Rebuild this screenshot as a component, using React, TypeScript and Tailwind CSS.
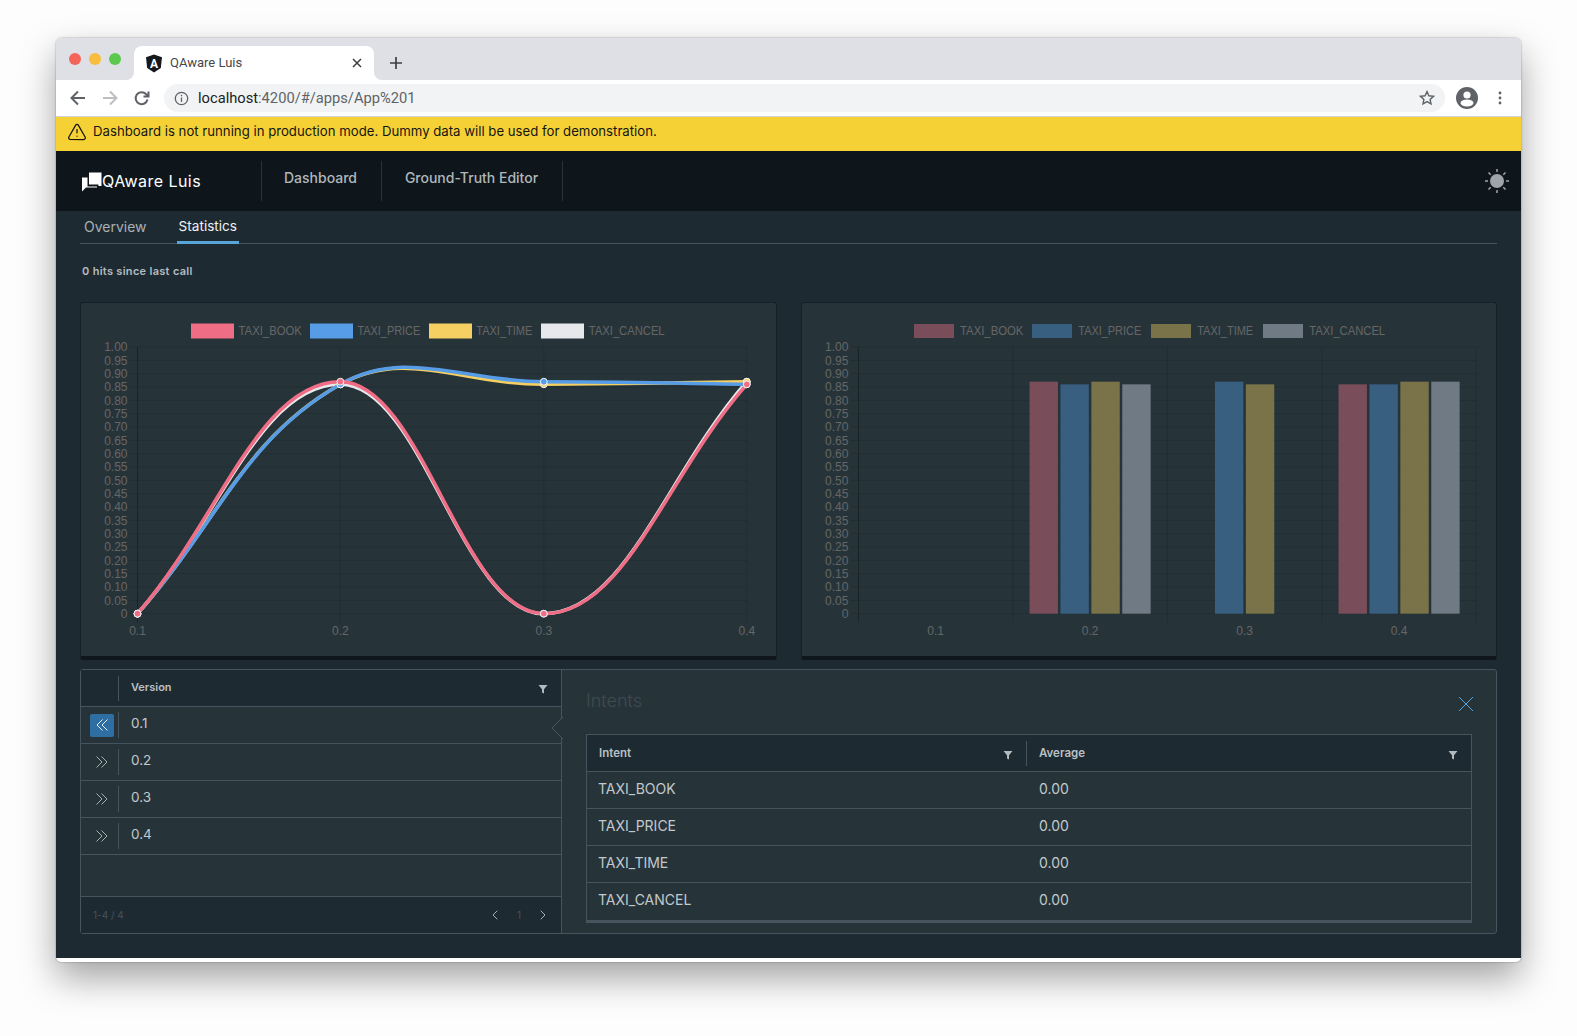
import { ChevronLeft, ChevronRight, TriangleAlert } from 'lucide-react';

const ARIAL = { fontFamily: '"Liberation Sans", Arial, sans-serif' };

// value axis shared by both charts, relative to the panel
const PLOT_TOP = 45;
const PLOT_BOTTOM = 311.7;
const TICKS = ['1.00', '0.95', '0.90', '0.85', '0.80', '0.75', '0.70', '0.65', '0.60', '0.55', '0.50', '0.45', '0.40', '0.35', '0.30', '0.25', '0.20', '0.15', '0.10', '0.05', '0'];

function valueY(v: number): number {
  return PLOT_BOTTOM - (PLOT_BOTTOM - PLOT_TOP) * v;
}

// same spline as a chart.js line with tension 0.4
function splinePath(points: [number, number][]): string {
  const controls = points.map((p, i) => {
    const prev = points[i - 1] ?? p;
    const next = points[i + 1] ?? p;
    const d01 = Math.hypot(p[0] - prev[0], p[1] - prev[1]);
    const d12 = Math.hypot(next[0] - p[0], next[1] - p[1]);
    const total = d01 + d12 || 1;
    const fa = (0.4 * d01) / total;
    const fb = (0.4 * d12) / total;
    return {
      before: [p[0] - fa * (next[0] - prev[0]), p[1] - fa * (next[1] - prev[1])],
      after: [p[0] + fb * (next[0] - prev[0]), p[1] + fb * (next[1] - prev[1])],
    };
  });
  let d = `M${points[0][0]} ${points[0][1]}`;
  for (let i = 1; i < points.length; i++) {
    const a = controls[i - 1].after;
    const b = controls[i].before;
    d += ` C${a[0]} ${a[1]} ${b[0]} ${b[1]} ${points[i][0]} ${points[i][1]}`;
  }
  return d;
}

const LINE_X = [57.5, 260.4, 463.8, 666.8];
const LINE_SERIES = [
  { color: '#e6e8ec', values: [0, 0.86, 0, 0.87] },
  { color: '#f5cf62', values: [0, 0.86, 0.86, 0.87] },
  { color: '#569ce6', values: [0, 0.86, 0.87, 0.86] },
  { color: '#f06d86', values: [0, 0.87, 0, 0.86] },
];
const LINE_LEGEND = [
  { x: 111, text: 158.5, len: 63.4, label: 'TAXI_BOOK', color: '#f06d86' },
  { x: 230, text: 277.4, len: 62.9, label: 'TAXI_PRICE', color: '#569ce6' },
  { x: 349, text: 396.3, len: 56, label: 'TAXI_TIME', color: '#f5cf62' },
  { x: 461, text: 508.8, len: 75.8, label: 'TAXI_CANCEL', color: '#e6e8ec' },
];

const BAR_LEFT = 57.4;
const BAR_STEP = 154.5;
const BAR_COLORS = ['#7a4d5a', '#385e80', '#7a7349', '#6f7a84'];
const BAR_DATA = [
  [0, 0, 0, 0],
  [0.87, 0.86, 0.87, 0.86],
  [0, 0.87, 0.86, 0],
  [0.86, 0.86, 0.87, 0.87],
];
const BAR_LEGEND = [
  { x: 113, text: 159, len: 63.4, label: 'TAXI_BOOK', color: BAR_COLORS[0] },
  { x: 231, text: 277.3, len: 62.9, label: 'TAXI_PRICE', color: BAR_COLORS[1] },
  { x: 350, text: 396.2, len: 56, label: 'TAXI_TIME', color: BAR_COLORS[2] },
  { x: 462, text: 508.3, len: 75.8, label: 'TAXI_CANCEL', color: BAR_COLORS[3] },
];

function ValueAxis({ left, right }: { left: number; right: number }) {
  return (
    <g fontSize="12" fill="#666" style={ARIAL}>
      {TICKS.map((t, i) => {
        const y = valueY(1 - i * 0.05);
        return (
          <g key={t}>
            <line x1={left - 8} x2={right} y1={y} y2={y} stroke="#000" strokeOpacity="0.13" />
            <text x={left - 10} y={y + 4.3} textAnchor="end">{t}</text>
          </g>
        );
      })}
      <line x1={left} x2={left} y1={PLOT_TOP} y2={PLOT_BOTTOM + 9} stroke="#000" strokeOpacity="0.3" />
    </g>
  );
}

function LineChart() {
  return (
    <svg viewBox="1 1 695 353" className="block w-full h-full">
      {LINE_LEGEND.map((l) => (
        <g key={l.label}>
          <rect x={l.x} y={21.5} width={43} height={15} fill={l.color} />
          <text x={l.text} y={33} fontSize="12" fill="#666" textLength={l.len} lengthAdjust="spacingAndGlyphs" style={ARIAL}>{l.label}</text>
        </g>
      ))}
      <ValueAxis left={LINE_X[0]} right={LINE_X[3]} />
      {LINE_X.map((x, i) => (
        <g key={x}>
          {i > 0 && <line x1={x} x2={x} y1={PLOT_TOP} y2={PLOT_BOTTOM + 9} stroke="#000" strokeOpacity="0.13" />}
          <text x={x} y={333} fontSize="12" fill="#666" textAnchor="middle" style={ARIAL}>{`0.${i + 1}`}</text>
        </g>
      ))}
      {LINE_SERIES.map((s) => (
        <path
          key={s.color}
          d={splinePath(s.values.map((v, i) => [LINE_X[i], valueY(v)]))}
          fill="none"
          stroke={s.color}
          strokeWidth="3.5"
        />
      ))}
      {LINE_SERIES.map((s) =>
        s.values.map((v, i) => (
          <circle key={`${s.color}${i}`} cx={LINE_X[i]} cy={valueY(v)} r="3.4" fill={s.color} stroke="#f2f2f2" strokeWidth="1" />
        )),
      )}
    </svg>
  );
}

function BarChart() {
  return (
    <svg viewBox="1 1 694 353" className="block w-full h-full">
      {BAR_LEGEND.map((l) => (
        <g key={l.label}>
          <rect x={l.x} y={22} width={40} height={14} fill={l.color} />
          <text x={l.text} y={33} fontSize="12" fill="#666" textLength={l.len} lengthAdjust="spacingAndGlyphs" style={ARIAL}>{l.label}</text>
        </g>
      ))}
      <ValueAxis left={BAR_LEFT} right={BAR_LEFT + BAR_STEP * 4} />
      {[1, 2, 3, 4].map((i) => {
        const x = BAR_LEFT + BAR_STEP * i;
        return <line key={i} x1={x} x2={x} y1={PLOT_TOP} y2={PLOT_BOTTOM + 9} stroke="#000" strokeOpacity="0.13" />;
      })}
      {BAR_DATA.map((group, c) => {
        const start = BAR_LEFT + BAR_STEP * c + BAR_STEP * 0.1;
        return (
          <g key={c}>
            {group.map((v, i) =>
              v > 0 ? (
                <rect
                  key={i}
                  x={start + i * 30.9 + 1.2}
                  y={valueY(v)}
                  width={28.4}
                  height={PLOT_BOTTOM - valueY(v)}
                  fill={BAR_COLORS[i]}
                />
              ) : null,
            )}
            <text x={BAR_LEFT + BAR_STEP * (c + 0.5)} y={333} fontSize="12" fill="#666" textAnchor="middle" style={ARIAL}>
              {`0.${c + 1}`}
            </text>
          </g>
        );
      })}
    </svg>
  );
}

function FilterIcon({ className }: { className?: string }) {
  return (
    <svg width="10" height="10" viewBox="0 0 10 10" className={className}>
      <path d="M0.5 1h9L6 5.2V9.5L4 8.6V5.2z" fill="#b4bbbf" />
    </svg>
  );
}

function DoubleChevron({ dir, color }: { dir: 'left' | 'right'; color: string }) {
  return (
    <svg width="14" height="14" viewBox="0 0 14 14" fill="none" stroke={color} strokeWidth="1">
      {dir === 'right' ? <path d="M1.5 1.5 7 7l-5.5 5.5M6.5 1.5 12 7l-5.5 5.5" /> : <path d="M12.5 1.5 7 7l5.5 5.5M7.5 1.5 2 7l5.5 5.5" />}
    </svg>
  );
}

function ChromeBar() {
  return (
    <>
      <div className="h-[42px] bg-[#dfe0e5] rounded-t-[6px] flex items-end pl-[13px]">
        <div className="flex gap-[8px] self-start mt-[15px]">
          <span className="w-3 h-3 rounded-full bg-[#f4645a]" />
          <span className="w-3 h-3 rounded-full bg-[#f8bd3c]" />
          <span className="w-3 h-3 rounded-full bg-[#5ac94e]" />
        </div>
        <div className="relative ml-[13px] w-[240px] h-[34px] bg-white rounded-t-[8px] flex items-center pl-[11px] pr-[12px] font-['Roboto',sans-serif] text-[13px] text-[#45474a]">
          {/* flared tab corners */}
          <svg width="8" height="8" viewBox="0 0 8 8" className="absolute -left-[8px] bottom-0"><path d="M8 0v8H0a8 8 0 0 0 8-8z" fill="#fff" /></svg>
          <svg width="8" height="8" viewBox="0 0 8 8" className="absolute -right-[8px] bottom-0"><path d="M0 0v8h8a8 8 0 0 1-8-8z" fill="#fff" /></svg>
          <svg width="18" height="19" viewBox="0 0 18 19">
            <path d="M9 0.5 17 3.3 15.8 14 9 18.5 2.2 14 1 3.3z" fill="#16191c" />
            <text x="9" y="14" textAnchor="middle" fontSize="12" fontWeight="700" fill="#fff" fontFamily="Roboto, sans-serif">A</text>
          </svg>
          <span className="ml-[7px] flex-1">QAware Luis</span>
          <svg width="10" height="10" viewBox="0 0 10 10" stroke="#3c3f42" strokeWidth="1.5"><path d="m1 1 8 8M9 1 1 9" /></svg>
        </div>
        <svg width="14" height="14" viewBox="0 0 14 14" stroke="#3c3f42" strokeWidth="1.7" className="ml-[15px] mb-[10px]"><path d="M7 1v12M1 7h12" /></svg>
      </div>
      <div className="h-[37px] bg-white border-b border-[#d2d3d6] flex items-center">
        <svg width="18" height="18" viewBox="0 0 18 18" fill="none" stroke="#5f6368" strokeWidth="2" className="ml-[13px]"><path d="M16 9H3M9 2.5 2.5 9 9 15.5" /></svg>
        <svg width="18" height="18" viewBox="0 0 18 18" fill="none" stroke="#bcbec1" strokeWidth="2" className="ml-[14px]"><path d="M2 9h13M9 2.5 15.5 9 9 15.5" /></svg>
        <svg width="18" height="18" viewBox="0 0 18 18" fill="none" stroke="#5f6368" strokeWidth="2" className="ml-[14px]"><path d="M14.5 10.5A6 6 0 1 1 13 5l2 2M15.5 2.5V7.5H10.5" /></svg>
        <div className="ml-[13px] w-[1281px] h-[28px] rounded-full bg-[#f1f3f4] flex items-center pl-[10px] pr-[10px] font-['Roboto',sans-serif] text-[14.7px]">
          <svg width="15" height="15" viewBox="0 0 15 15" fill="none" stroke="#5f6368" strokeWidth="1.3">
            <circle cx="7.5" cy="7.5" r="6.2" />
            <path d="M7.5 6.5v4.4M7.5 3.8v1.5" />
          </svg>
          <span className="ml-[9px] flex-1">
            <span className="text-[#202124]">localhost</span>
            <span className="text-[#5f6368]">:4200/#/apps/App%201</span>
          </span>
          <svg width="16" height="16" viewBox="0 0 16 16" fill="none" stroke="#5f6368" strokeWidth="1.4"><path d="m8 1.6 1.9 4.2 4.6.5-3.4 3.1.9 4.5L8 11.6l-4 2.3.9-4.5L1.5 6.3l4.6-.5z" /></svg>
        </div>
        <svg width="22" height="22" viewBox="0 0 22 22" className="ml-[11px]">
          <circle cx="11" cy="11" r="11" fill="#5f6368" />
          <circle cx="11" cy="8" r="3.6" fill="#fff" />
          <ellipse cx="11" cy="16" rx="6.5" ry="3.4" fill="#fff" />
        </svg>
        <svg width="4" height="14" viewBox="0 0 4 14" fill="#5f6368" className="ml-[20px]">
          <circle cx="2" cy="2" r="1.4" /><circle cx="2" cy="7" r="1.4" /><circle cx="2" cy="12" r="1.4" />
        </svg>
      </div>
    </>
  );
}

function VersionTable() {
  const rows = ['0.1', '0.2', '0.3', '0.4'];
  return (
    <div className="w-[481px] shrink-0 flex flex-col border-r border-[#46555d]">
      <div className="h-[37px] bg-[#1e2a32] border-b border-[#46555d] flex items-start pt-[6px]">
        <div className="w-[38px] h-[25px] border-r border-[#46555d]" />
        <span className="ml-[12px] mt-[3px] text-[11px] font-semibold text-[#b9c0c4]">Version</span>
        <FilterIcon className="ml-auto mr-[13px] mt-[8px]" />
      </div>
      {rows.map((r, i) => (
        <div key={r} className="h-[37px] border-b border-[#46555d] flex items-center">
          <div className="w-[38px] h-[26px] border-r border-[#46555d] flex items-center justify-center pl-[4px]">
            {i === 0 ? (
              <span className="w-[24px] h-[23px] rounded-[2px] bg-[#2f6ea3] flex items-center justify-center">
                <DoubleChevron dir="left" color="#e6eef5" />
              </span>
            ) : (
              <DoubleChevron dir="right" color="#a7afb3" />
            )}
          </div>
          <span className="ml-[12px] text-[13.5px] text-[#c3c9cc] -mt-[3px]">{r}</span>
        </div>
      ))}
      <div className="flex-1" />
      <div className="h-[37px] bg-[#1e2a32] border-t border-[#46555d] flex items-center pl-[12px] pr-[10px] text-[10px] text-[#45525a]">
        <span>1-4 / 4</span>
        <ChevronLeft size={16} className="ml-auto text-[#a7afb3]" strokeWidth={1.5} />
        <span className="mx-[14px]">1</span>
        <ChevronRight size={16} className="text-[#a7afb3]" strokeWidth={1.5} />
      </div>
    </div>
  );
}

function IntentDetail() {
  const rows = ['TAXI_BOOK', 'TAXI_PRICE', 'TAXI_TIME', 'TAXI_CANCEL'];
  return (
    <div className="flex-1 relative pl-[24px] pr-[24px]">
      <svg width="12" height="22" viewBox="0 0 12 22" className="absolute -left-[11px] top-[47px]">
        <path d="M12 0 1 11l11 11" fill="#26343a" stroke="#46555d" />
      </svg>
      <div className="h-[64px] flex items-start justify-between">
        <span className="mt-[17px] text-[18px] font-light text-[#414a4f]">Intents</span>
        <svg width="16" height="16" viewBox="0 0 16 16" stroke="#57a5d8" strokeWidth="1" className="mt-[26px] mr-[-2px]"><path d="m1 1 14 14M15 1 1 15" /></svg>
      </div>
      <div className="border-x border-t border-b-[3px] border-[#46555d]">
        <div className="h-[37px] bg-[#1e2a32] border-b border-[#46555d] flex pt-[6px]">
          <div className="w-[440px] h-[25px] border-r border-[#46555d] flex items-start pl-[12px]">
            <span className="mt-[4px] text-[11.5px] font-semibold text-[#b9c0c4]">Intent</span>
            <FilterIcon className="ml-auto mr-[13px] mt-[9px]" />
          </div>
          <div className="flex-1 flex items-start pl-[12px]">
            <span className="mt-[4px] text-[11.5px] font-semibold text-[#b9c0c4]">Average</span>
            <FilterIcon className="ml-auto mr-[13px] mt-[9px]" />
          </div>
        </div>
        {rows.map((r, i) => (
          <div key={r} className={`h-[37px] flex items-center text-[14px] text-[#c3c9cc] ${i < 3 ? 'border-b border-[#46555d]' : ''}`}>
            <span className="w-[439px] pl-[11px] -mt-[4px]">{r}</span>
            <span className="pl-[13px] -mt-[4px]">0.00</span>
          </div>
        ))}
      </div>
    </div>
  );
}

export default function App() {
  return (
    <div className="h-[1036px] overflow-hidden bg-[#fdfdfd] pl-[56px] pt-[38px] font-['Inter',sans-serif]">
      <div className="w-[1465px] h-[924px] bg-white pb-[4px] flex flex-col rounded-t-[6px] rounded-b-[5px] shadow-[0_0_2px_rgba(0,0,0,0.4),0_16px_36px_rgba(0,0,0,0.36)]">
        <ChromeBar />

        {/* Dev mode warning */}
        <div className="h-[34px] bg-[#f5d135] flex items-center pl-[11px] text-[13.2px] text-[#151515]">
          <TriangleAlert size={20} strokeWidth={1.5} className="-mt-[4px]" />
          <span className="ml-[6px] -mt-[5px]">Dashboard is not running in production mode. Dummy data will be used for demonstration.</span>
        </div>

        {/* Header */}
        <div className="h-[60px] bg-[#0e161c] flex items-center pl-[25px] pr-[12px]">
          <svg width="22" height="22" viewBox="0 0 22 22" fill="#fff" className="mt-[1px] shrink-0">
            <path d="M8 1.5h12.500v13.500h-3l-0.200-1.400H8z" />
            <path d="M1 6.500h5.500v9h9.500v1H5L1 20.500z" />
          </svg>
          <span className="-ml-px w-[159px] text-[16px] text-white tracking-[0.45px]">QAware Luis</span>
          <div className="h-[40px] border-l border-[#2a3238] flex">
            <a className="w-[120px] border-r border-[#2a3238] text-center pt-[6px] pr-[2px] text-[14px] font-medium text-[#b0b7bb]">Dashboard</a>
            <a className="w-[181px] border-r border-[#2a3238] text-center pt-[6px] pr-[1px] text-[14px] font-medium text-[#b0b7bb]">Ground-Truth Editor</a>
          </div>
          <svg width="24" height="24" viewBox="0 0 24 24" stroke="#9fa4a8" strokeWidth="1.5" className="ml-auto">
            <circle cx="12" cy="12" r="7" fill="#9fa4a8" stroke="none" />
            <path d="M12 0v3M12 21v3M0 12h3M21 12h3M3.500 3.500l2.200 2.200M18.300 18.300l2.200 2.200M20.500 3.500l-2.200 2.200M5.700 18.300l-2.200 2.200" />
          </svg>
        </div>

        {/* Page */}
        <div className="flex-1 bg-[#1e2a32] px-[24px] flex flex-col">
          <div className="h-[33px] border-b border-[#46555d] flex items-start text-[14px]">
            <span className="ml-[4px] mt-[5px] text-[#a9b1b5]">Overview</span>
            <span className="ml-[30px] px-[2px] h-[33px] pt-[5px] border-b-[3px] border-[#57a5d8] text-[13.6px] text-[#eef1f2]">Statistics</span>
          </div>
          <p className="mt-[20px] ml-[2px] text-[11px] leading-[14px] font-semibold tracking-[0.3px] text-[#b5bcc0]">0 hits since last call</p>

          <div className="mt-[24px] flex gap-[24px]">
            <div className="w-[697px] h-[358px] bg-[#26343a] rounded-[3px] border-t border-x border-[#161f25] border-b-[4px] border-b-[#10171c] overflow-hidden">
              <LineChart />
            </div>
            <div className="flex-1 h-[358px] bg-[#26343a] rounded-[3px] border-t border-x border-[#161f25] border-b-[4px] border-b-[#10171c] overflow-hidden">
              <BarChart />
            </div>
          </div>

          <div className="mt-[9px] h-[265px] flex bg-[#26343a] border border-[#46555d] rounded-[3px]">
            <VersionTable />
            <IntentDetail />
          </div>
        </div>
      </div>
    </div>
  );
}
